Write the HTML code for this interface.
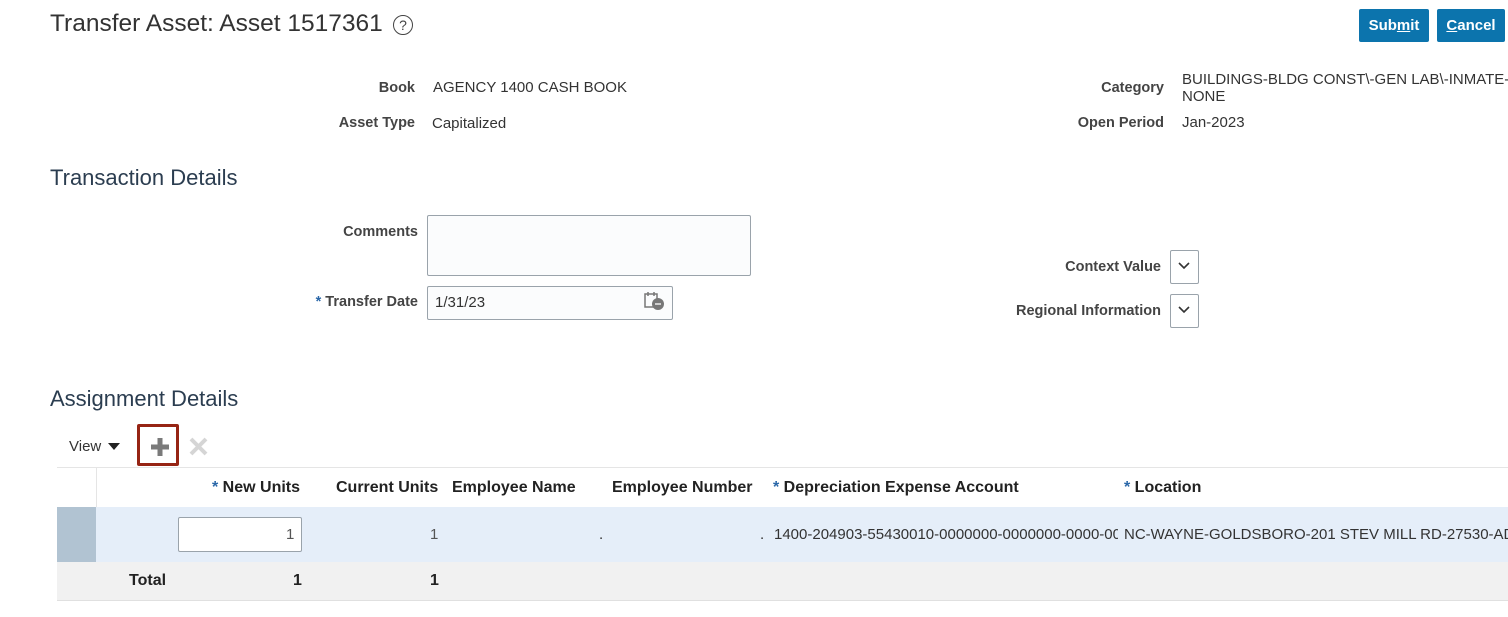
<!DOCTYPE html>
<html><head><meta charset="utf-8"><style>
body{margin:0;width:1508px;height:617px;background:#fff;font-family:"Liberation Sans",Arial,sans-serif;position:relative;overflow:hidden;color:#333}
.a{position:absolute;white-space:nowrap}
.h{color:#2b3d50;font-size:22px}
.lbl{font-size:14.5px;font-weight:bold;color:#444;text-align:right}
.v{font-size:15px;color:#333}
.btn{position:absolute;top:9px;height:33px;background:#0c74ad;color:#fff;font-weight:bold;font-size:15px;line-height:33px;text-align:center;border-radius:2px}
.th{font-size:16px;font-weight:bold;color:#222}
.st{color:#2a67a8}
</style></head><body>
<div class="a" style="left:50px;top:10px;font-size:24.5px;color:#333">Transfer Asset: Asset 1517361</div>
<div class="a" style="left:393px;top:15px;width:18px;height:18px;border:1.5px solid #444;border-radius:50%;font-size:14px;text-align:center;line-height:18px;color:#444">?</div>
<div class="btn" style="left:1359px;width:70px">Sub<u>m</u>it</div>
<div class="btn" style="left:1437px;width:68px"><u>C</u>ancel</div>

<div class="a lbl" style="left:300px;width:115px;top:80px">Book</div>
<div class="a v" style="left:433px;top:79px">AGENCY 1400 CASH BOOK</div>
<div class="a lbl" style="left:300px;width:115px;top:115px">Asset Type</div>
<div class="a v" style="left:432px;top:115px">Capitalized</div>
<div class="a lbl" style="left:1000px;width:164px;top:80px">Category</div>
<div class="a v" style="left:1182px;top:71px;line-height:17px">BUILDINGS-BLDG CONST\-GEN LAB\-INMATE-<br>NONE</div>
<div class="a lbl" style="left:1000px;width:164px;top:115px">Open Period</div>
<div class="a v" style="left:1182px;top:114px">Jan-2023</div>

<div class="a h" style="left:50px;top:165px">Transaction Details</div>
<div class="a lbl" style="left:300px;width:118px;top:224px">Comments</div>
<div class="a" style="left:427px;top:215px;width:322px;height:59px;border:1px solid #9aa3ab;border-radius:2px;background:#fbfcfd"></div>
<div class="a lbl" style="left:300px;width:118px;top:294px"><span class="st">*</span> Transfer Date</div>
<div class="a" style="left:427px;top:286px;width:244px;height:32px;border:1px solid #9aa3ab;border-radius:2px;background:#fbfcfd"></div>
<div class="a v" style="left:435px;top:294px">1/31/23</div>
<svg class="a" style="left:644px;top:291px" width="22" height="20" viewBox="0 0 22 20"><rect x="1" y="3" width="12" height="13" fill="none" stroke="#777" stroke-width="1.5"/><path d="M4 1v4M10 1v4" stroke="#777" stroke-width="1.5"/><circle cx="14" cy="13" r="6" fill="#777"/><path d="M11 13h6" stroke="#fff" stroke-width="1.3"/></svg>

<div class="a lbl" style="left:1000px;width:161px;top:259px">Context Value</div>
<div class="a" style="left:1170px;top:250px;width:27px;height:32px;border:1px solid #9aa3ab;border-radius:2px"></div>
<div class="a lbl" style="left:1000px;width:161px;top:303px">Regional Information</div>
<div class="a" style="left:1170px;top:294px;width:27px;height:32px;border:1px solid #9aa3ab;border-radius:2px"></div>
<svg class="a" style="left:1178px;top:262px" width="12" height="8"><path d="M1 1l5 5 5-5" fill="none" stroke="#333" stroke-width="1.6"/></svg>
<svg class="a" style="left:1178px;top:306px" width="12" height="8"><path d="M1 1l5 5 5-5" fill="none" stroke="#333" stroke-width="1.6"/></svg>

<div class="a h" style="left:50px;top:386px">Assignment Details</div>
<div class="a" style="left:69px;top:438px;font-size:15px;color:#333">View</div>
<svg class="a" style="left:108px;top:443px" width="12" height="8"><path d="M0 0h12l-6 7z" fill="#222"/></svg>
<div class="a" style="left:137px;top:424px;width:36px;height:36px;border:3px solid #962414;border-radius:2px"></div>
<svg class="a" style="left:150px;top:437px" width="20" height="20"><path d="M10 1v18M1 10h18" stroke="#7a7a7a" stroke-width="5"/></svg>
<svg class="a" style="left:189px;top:437px" width="19" height="19"><path d="M2 2l15 15M17 2L2 17" stroke="#d5d5d5" stroke-width="4"/></svg>

<div class="a" style="left:57px;top:467px;width:1451px;height:1px;background:#e5e5e5"></div>
<div class="a" style="left:96px;top:468px;width:1px;height:39px;background:#e5e5e5"></div>
<div class="a th" style="left:212px;top:479px"><span class="st">*</span> New Units</div>
<div class="a th" style="left:336px;top:479px">Current Units</div>
<div class="a th" style="left:452px;top:479px">Employee Name</div>
<div class="a th" style="left:612px;top:479px">Employee Number</div>
<div class="a th" style="left:773px;top:479px"><span class="st">*</span> Depreciation Expense Account</div>
<div class="a th" style="left:1124px;top:479px"><span class="st">*</span> Location</div>

<div class="a" style="left:57px;top:507px;width:1451px;height:55px;background:#e5eef9"></div>
<div class="a" style="left:57px;top:507px;width:39px;height:55px;background:#b1c3d2"></div>
<div class="a" style="left:178px;top:517px;width:122px;height:33px;border:1px solid #9aa3ab;border-radius:2px;background:#fff"></div>
<div class="a v" style="left:286px;top:526px;color:#555">1</div>
<div class="a v" style="left:430px;top:526px;color:#555">1</div>
<div class="a v" style="left:599px;top:526px">.</div>
<div class="a v" style="left:760px;top:526px">.</div>
<div class="a v" style="left:774px;top:526px;width:344px;overflow:hidden">1400-204903-55430010-0000000-0000000-0000-0000</div>
<div class="a v" style="left:1124px;top:526px">NC-WAYNE-GOLDSBORO-201 STEV MILL RD-27530-ADMIN</div>

<div class="a" style="left:57px;top:562px;width:1451px;height:38px;background:#f1f1f1;border-bottom:1px solid #e0e0e0"></div>
<div class="a th" style="left:129px;top:572px">Total</div>
<div class="a th" style="left:293px;top:572px">1</div>
<div class="a th" style="left:430px;top:572px">1</div>
</body></html>
